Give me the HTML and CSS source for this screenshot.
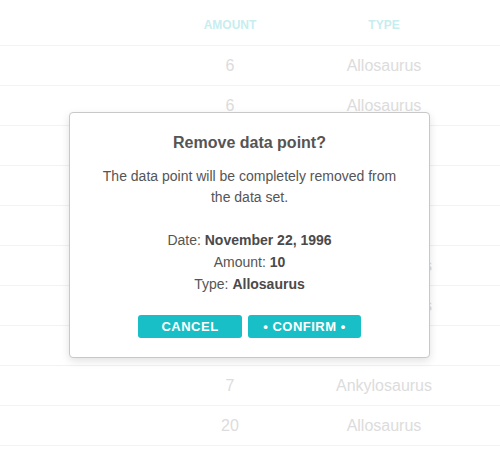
FILE: index.html
```html
<!DOCTYPE html>
<html>
<head>
<meta charset="utf-8">
<link rel="stylesheet" href="styles.css">
</head>
<body>
<div class="table">
  <div class="row head"><span></span><span>AMOUNT</span><span>TYPE</span><span></span></div>
  <div class="row"><span></span><span>6</span><span>Allosaurus</span><span></span></div>
  <div class="row"><span></span><span>6</span><span>Allosaurus</span><span></span></div>
  <div class="row"><span></span><span>12</span><span>Allosaurus</span><span></span></div>
  <div class="row"><span></span><span>9</span><span>Allosaurus</span><span></span></div>
  <div class="row"><span></span><span>10</span><span>Allosaurus</span><span></span></div>
  <div class="row"><span></span><span>4</span><span>Ankylosaurus</span><span></span></div>
  <div class="row"><span></span><span>15</span><span>Ankylosaurus</span><span></span></div>
  <div class="row"><span></span><span>8</span><span>Allosaurus</span><span></span></div>
  <div class="row"><span></span><span>7</span><span>Ankylosaurus</span><span></span></div>
  <div class="row"><span></span><span>20</span><span>Allosaurus</span><span></span></div>
</div>
<div class="modal">
  <h2 class="modal-title">Remove data point?</h2>
  <p class="modal-text">The data point will be completely removed from the data set.</p>
  <div class="details">
    <div>Date: <b>November 22, 1996</b></div>
    <div>Amount: <b>10</b></div>
    <div>Type: <b>Allosaurus</b></div>
  </div>
  <div class="actions">
    <button class="btn cancel">CANCEL</button>
    <button class="btn confirm">• CONFIRM •</button>
  </div>
</div>
</body>
</html>
```

FILE: styles.css
```css
html, body {
  margin: 0;
  padding: 0;
  background: #fff;
  font-family: "Liberation Sans", Arial, sans-serif;
  overflow: hidden;
}
.table {
  width: 500px;
}
.row {
  display: grid;
  grid-template-columns: 153px 154px 154px 1fr;
  height: 40px;
  box-sizing: border-box;
  align-items: center;
  border-bottom: 1px solid #f2f2f2;
  font-size: 16px;
  color: #dcdcdc;
}
.row span {
  text-align: center;
}
.row.head {
  height: 46px;
  font-size: 12px;
  font-weight: bold;
  color: #c6eef0;
  align-items: start;
  padding-top: 18px;
}
.modal {
  position: absolute;
  left: 69px;
  top: 112px;
  width: 361px;
  height: 246px;
  box-sizing: border-box;
  background: #fff;
  border: 1px solid #c8c8c8;
  border-radius: 4px;
  box-shadow: 0 3px 8px rgba(0,0,0,0.12);
  padding: 20px 25px 0;
  text-align: center;
  color: #555;
}
.modal-title {
  margin: 0;
  font-size: 16px;
  line-height: 20px;
  font-weight: bold;
  color: #555;
}
.modal-text {
  margin: 13px 0 0;
  font-size: 14px;
  line-height: 21px;
  color: #555;
}
.details {
  margin-top: 21px;
  font-size: 14px;
  line-height: 22px;
  color: #555;
}
.details b {
  color: #4a4a4a;
}
.actions {
  display: flex;
  justify-content: center;
  gap: 6px;
  margin-top: 20px;
}
.btn {
  height: 23px;
  border: none;
  border-radius: 3px;
  background: #19bfc6;
  color: #fff;
  font-family: "Liberation Sans", Arial, sans-serif;
  font-size: 13px;
  font-weight: bold;
  letter-spacing: 0.5px;
  padding: 0;
  line-height: 23px;
}
.cancel { width: 104px; }
.confirm { width: 113px; }
```
